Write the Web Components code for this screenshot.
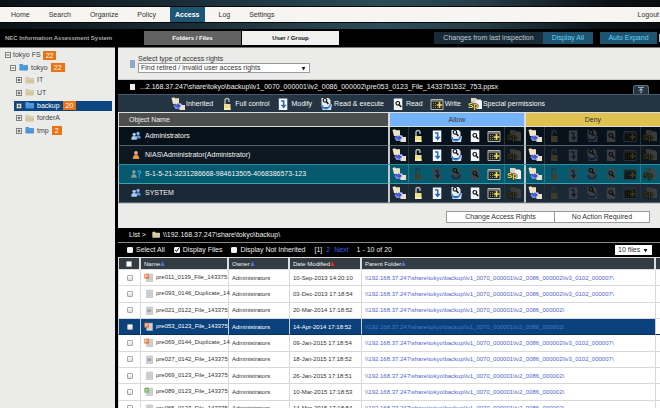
<!DOCTYPE html>
<html lang="en">
<head>
<meta charset="utf-8">
<title>NEC Information Assessment System</title>
<style>
html, body { margin: 0; height: 100%; }
body { font: 7px/8px "Liberation Sans", Arial, sans-serif; color: #333; background: #ecedeb; overflow: hidden; }
</style>
</head>
<body>
<app-shell>
  <top-nav slot="header"></top-nav>
  <sub-bar slot="header"></sub-bar>
  <folder-tree slot="side"></folder-tree>
  <filter-bar></filter-bar>
  <permission-panel></permission-panel>
  <file-list></file-list>
</app-shell>
<script>
const BASE = `*{box-sizing:border-box} button,select,input{font:inherit;color:inherit;margin:0;padding:0} button{border:0;background:none;cursor:pointer;white-space:nowrap} a{color:inherit;text-decoration:none}`;
function define(name, render) {
  customElements.define(name, class extends HTMLElement {
    connectedCallback() {
      if (this.shadowRoot) return;
      this.attachShadow({ mode: "open" }).innerHTML = `<style>${BASE}</style>` + render(this);
    }
  });
}

const folder = (a, b) => `<path d="M.5 2.2q0-1 1-1h3l1.200 1.300h5.300q1 0 1 1v5.500q0 1-1 1h-9.500q-1 0-1-1z" fill="${a}"/><path d="M.8 4.200h10.900" stroke="${b}" stroke-width=".8"/>`;
const people = c => `<circle cx="8.500" cy="3" r="2" fill="#7fb2ee"/><path d="M6 9V7q0-2 2.500-2T11.500 7v2z" fill="#5a90d6"/><circle cx="3.800" cy="4" r="2" fill="${c}"/><path d="M.5 10.500V8q0-2 3.200-2T7 8v2.500z" fill="${c}"/>`;
const doc = mark => `<path d="M3.500 1.500h8v10h-8z" fill="#d5d7d6" stroke="#a3a8a8" stroke-width=".7"/><path d="M5 4.500h5M5 6.500h5M5 8.500h5" stroke="#b0b4b5" stroke-width=".6"/>${mark}`;
const glass = (x, y) => `<g transform="translate(${x} ${y})" fill="none" stroke="#111"><circle cx="2.500" cy="2.300" r="1.800" stroke-width="1.200"/><path d="M3.900 3.700l2 2.300" stroke-width="1.500"/></g>`;
const ICONS = {
  inherited: [14, `<path d="M4 6h6l1 3-3 3H4.500L2.500 9z" fill="#8792e0"/><path d="M.5 1l2.500-.7 1 1h4V7h-6z" fill="#f1e4c4"/><path d="M8 7.500l2-.5.900.900H14V13H8.500z" fill="#eadfca"/><path d="M3 7.500q.5 2.500 3.500 2.500V12l3.700-3-3.700-3v2Q5 8 4.800 6.500z" fill="#3f58d6"/>`],
  full: [14, `<path d="M5 7V3.500q0-2 2-2t2 2V5" fill="none" stroke="#b9bbae" stroke-width="1.400"/><path d="M4 7h6.500v6H4z" fill="#eee08a"/><path d="M4 11h6.500v2H4z" fill="#f7efb0"/>`],
  modify: [14, `<path d="M2.800 1.500h8.500v11.500H2.800z" fill="#f4f8fc"/><path d="M5 4h2.700v5" fill="none" stroke="#2768b8" stroke-width="1.500"/><path d="M4.600 7.800h6L7.700 11.500z" fill="#2768b8"/>`],
  exec: [14, `<path d="M2.500 1h7l2 2v7h-9z" fill="#e9edf2"/>${glass(3.500, 1)}<path d="M3 8v3h6V9l4-2-1 6H3.500z" fill="#d8e7fb"/><path d="M3 8q.5 3.700 4 3.500 3.500 0 4-4" fill="none" stroke="#3b80d4" stroke-width="1.800"/>`],
  read: [14, `<path d="M2.800 1.500h8.500v11.500H2.800z" fill="#f3f5f6"/>${glass(4.300, 4)}`],
  write: [14, `<path d="M1 2.500h12v10H1z" fill="#242521" stroke="#c7cbc8" stroke-width=".9"/><path d="M1.500 4h11" stroke="#e4e4e0" stroke-width=".8"/><path d="M3 6.500h4M3 8.500h3M3 10.500h6" stroke="#85867a" stroke-width="1" stroke-dasharray="1 1"/><path d="M9.500 5v6M6.700 8h5.600" stroke="#f0dd56" stroke-width="1.700"/>`],
  special: [14, `<path d="M3 1h5l1 1.500v5H3z" fill="#ddd5bd"/><path d="M8 2.500h4.500L14 4v8H8z" fill="#f4f2eb"/><text x="0" y="11" font-family="Liberation Sans, Arial, sans-serif" font-weight="bold" font-size="8" fill="#f0df68" stroke="#2b2a12" stroke-width="1.200" paint-order="stroke">Sp</text>`],
  folder: [12, folder("#d3c7a2", "#e4dcc1")],
  blue: [12, folder("#4b93d7", "#74b2e8")],
  group: [12, people("#a9cdf5")],
  user: [12, `<circle cx="6" cy="3.500" r="2.200" fill="#f2b27a"/><path d="M2.300 10.700V9q.5-2.500 2.700-3.300h2Q9.200 6.500 9.700 9v1.700z" fill="#ef9548"/>`],
  unknown: [12, `<circle cx="3.500" cy="3.500" r="2" fill="#9ba5a8"/><path d="M.3 10.500V8.500q.7-2.500 3.200-2.500t3.200 2.500v2z" fill="#8c9699"/><path d="M8 4q.2-2 2-1.900 1.700.1 1.500 1.900Q11.200 5.500 9.800 6v2M9.800 9v1.700" stroke="#25b6e6" stroke-width="1.400" fill="none"/>`],
  ppt: [12, doc(`<path d="M.5 1h6v6.500h-6z" fill="#e8743a"/><path d="M2.200 6V2.500h1.500q1.200 0 1.200 1t-1.200 1H2.200" fill="none" stroke="#fff" stroke-width=".8"/>`)],
  plain: [12, doc("")],
  text: [12, doc(`<path d="M4.500 4.500h5v3.500h-5z" fill="#9fa5aa"/>`)],
  xls: [12, doc(`<path d="M.5 1h6v6.500h-6z" fill="#6cb355"/><path d="M2 2.500l3 3.500M5 2.500L2 6" stroke="#fff" stroke-width=".8"/>`)],
  minus: [8, `<path d="M.5.5h7v7h-7z" fill="#f6f6f4" stroke="#444" stroke-width="1"/><path d="M2 4h4" stroke="#222"/>`],
  plus: [8, `<path d="M.5.5h7v7h-7z" fill="#f6f6f4" stroke="#444" stroke-width="1"/><path d="M2 4h4M4 2v4" stroke="#222"/>`],
  arrow: [8, `<path d="M1 1.500h6L4 7z" fill="#111"/>`],
  sortblue: [8, `<path d="M.5 8h7L4 .5z" fill="#4a74e6"/>`],
  sortred: [8, `<path d="M.5 8h7L4 .5z" fill="#e02a2a"/>`],
  collapse: [12, `<path d="M1.500 2h9" stroke="#d5dde2" stroke-width="1.200"/><path d="M6 11V4M3 7l3-3 3 3" fill="none" stroke="#d5dde2" stroke-width="1.300"/>`]
};
define("ui-icon", el => {
  const [s, body] = ICONS[el.getAttribute("name")];
  return `<style>:host{display:inline-block;flex:none;width:var(--size,9px);height:var(--size,9px);vertical-align:middle} :host([dim]){filter:brightness(.28);opacity:.85} svg{display:block;width:100%;height:100%}</style><svg viewBox="0 0 ${s} ${s}" aria-hidden="true">${body}</svg>`;
});
const icon = (n, size = 9, extra = "") => `<ui-icon name="${n}" style="--size:${size}px" ${extra}></ui-icon>`;

define("app-shell", () => `<style>
:host{display:flex;flex-direction:column;height:100vh;overflow:hidden}
.body{flex:1;min-height:0;display:grid;grid-template-columns:115px minmax(0,1fr);column-gap:3px;background:#000}
aside,main{background:#ebecea;border-top:1px solid #777;overflow:hidden}
</style><header><slot name="header"></slot></header><div class="body"><aside><slot name="side"></slot></aside><main><slot></slot></main></div>`);

define("top-nav", () => `<style>
:host{display:block;padding:7px 0;background:linear-gradient(90deg,#0b1216,#182a34 25%,#2b4c59 58%,#263e49 72%,#0d1216 92%,#0b0e10)}
nav{display:flex;gap:9px;padding-left:6px;background:#f6f5f1;outline:1px solid #07090a;line-height:15px}
a{padding:0 5px} a.on{background:#1f5674;color:#fff;font-weight:bold} .out{margin-left:auto;padding:0 1px}
</style><nav>${["Home", "Search", "Organize", "Policy", "Access", "Log", "Settings"].map(t => `<a href="#"${t === "Access" ? ' class="on" aria-current="page"' : ""}>${t}</a>`).join("")}<a href="#" class="out">Logout</a></nav>`);

define("sub-bar", () => `<style>
:host{display:flex;align-items:center;height:18px;background:#000;overflow:hidden}
h1{margin:0;padding-left:5px;width:144px;flex:none;font-size:6px;font-weight:bold;color:#a8a8a8}
.tabs{display:flex;gap:1px;font-size:6px;font-weight:bold;line-height:14px} .tabs button{width:97px;background:#f0f1ef;color:#111} .tabs .on{background:#626262;color:#fff}
.acts{display:flex;margin-left:auto;line-height:12px} .acts button{background:#1f5470;color:#5fd3f5}
.acts span{width:109px;text-align:center;background:#182a35;color:#c3ced3} .all{width:50px} .acts .exp{width:57px;margin-left:7px} .edge{width:1px;margin:2px 0 2px 2px;background:#bbb}
</style><h1>NEC Information Assessment System</h1><div class="tabs"><button class="on">Folders / Files</button><button>User / Group</button></div><div class="acts"><span>Changes from last inspection</span><button class="all">Display All</button><button class="exp">Auto Expand</button><i class="edge"></i></div>`);

const TREE = [[0, "minus", "", "tokyo FS", 22], [1, "minus", "blue", "tokyo", 22], [2, "plus", "folder", "IT"], [2, "plus", "folder", "UT"], [2, "plus", "blue", "backup", 20, 1], [2, "plus", "folder", "forderA"], [2, "plus", "blue", "tmp", 2]];
define("tree-item", el => `<style>
:host{display:flex;align-items:center;gap:3px;height:10px;margin-right:3px;padding-left:2px;color:#444}
:host([level="0"]){margin-left:3px;gap:2px} :host([level="1"]){margin-left:8px} :host([level="2"]){margin-left:14px}
:host([selected]){background:#0d4580;color:#fff} button{line-height:0}
::slotted(b){background:#ea7414;color:#fff;font-weight:normal;padding:0 3px;line-height:9px}
</style><button aria-label="Toggle">${icon(el.getAttribute("toggle"), 6)}</button>${el.getAttribute("folder") ? icon(el.getAttribute("folder"), 9) : ""}<slot></slot>`);
define("folder-tree", () => `<style>:host{display:grid;grid-template-rows:repeat(7,1fr);align-items:center;height:88px;padding-top:1px}</style>` +
  TREE.map(([l, t, f, n, c, s]) => `<tree-item level="${l}" toggle="${t}" folder="${f}"${s ? " selected" : ""}><a href="#">${n}</a>${c ? `<b>${c}</b>` : ""}</tree-item>`).join(""));

const SELECT = `.sel{display:grid;align-items:center;background:#fff;border:1px solid #999;color:#333} .sel>*{grid-area:1/1} .sel select{appearance:none;border:0;background:none;width:100%;line-height:8px;padding-left:2px} .sel ui-icon{justify-self:end;margin-right:3px;pointer-events:none}`;
define("filter-bar", () => `<style>${SELECT}
:host{display:grid;grid-template-columns:5px 172px;column-gap:3px;align-items:center;padding:7px 12px 6px;border-bottom:1px solid #ccc}
i{width:5px;height:8px;background:#8faac9} label{line-height:8px;display:block}
</style><i></i><div><label for="t">Select type of access rights</label><div class="sel"><select id="t"><option>Find retired / invalid user access rights</option></select>${icon("arrow", 5)}</div></div>`);

const RIGHTS = ["inherited", "full", "modify", "exec", "read", "write", "special"];
const LABELS = ["Inherited", "Full control", "Modify", "Read &amp; execute", "Read", "Write", "Special permissions"];
const SUBJECTS = [["group", "Administrators", "1111110", "a"], ["user", "NIAS\\Administrator(Administrator)", "1111110", "b"], ["unknown", "S-1-5-21-3231286668-984613505-4068386573-123", "1000011", "hit"], ["group", "SYSTEM", "1111110", "d"]];
const cells = m => RIGHTS.map((r, i) => `<td class="r${i}">${icon(r, 14, m[i] === "1" ? "" : "dim")}</td>`).join("");
define("permission-panel", () => `<style>
:host{display:block}
.path{display:flex;align-items:center;height:14px;padding-left:12px;gap:5px;background:#000;color:#eee}
.path i{width:5px;height:6px;background:#eee} .path button{margin:0 11px 0 auto;align-self:flex-end;width:16px;height:9px;line-height:0;border:1px solid #617180;border-bottom:0;border-radius:3px 3px 0 0;background:#243443}
.legend{display:flex;align-items:center;height:18px;margin:0;padding:0 0 0 53px;gap:7px;background:#243443;color:#f4f4f4;list-style:none;border-top:1px solid #4b5a68}
.legend li{display:flex;align-items:center;gap:1px;white-space:nowrap}
table{width:100%;table-layout:fixed;border-collapse:separate;border-spacing:0;color:#f2f2f2}
.name{width:auto}.w0{width:21px}.w{width:19px}.w6{width:20px}
th{height:15px;padding:0;font-weight:normal;border:solid #dcdcd8;border-width:1px 0 1px 2px;text-align:center;color:#333}
thead th:first-child{text-align:left;padding-left:10px;background:#4c4d4d;color:#eee;border-left-width:1px}
.allow{background:#74b3fb}.deny{background:#e0c253}
tbody th{height:19px;text-align:left;padding-left:12px;color:#f2f2f2;border-width:0 0 1px 1px;border-color:#54616b #ccc}
td{height:19px;padding:0;text-align:center;line-height:0;border-bottom:1px solid #54616b}
.r0{border-left:2px solid #c4c8ca;border-right:1px solid #26323d}.r6{border-left:1px solid #26323d}
th ui-icon{margin-right:4px}
.a{background:#07111a}.b{background:#0d1823}.d{background:#1b2836}
.hit{background:#055a70}.hit th,.hit td{border-bottom-color:#3aa0b0;box-shadow:0 -1px #2e8d9e}
.hit .r0{border-right-color:#2b7888}.hit .r6{border-left-color:#2b7888}
.acts{display:flex;justify-content:flex-end;padding:7px 10px 5px;border-top:1px solid #ccc}
.acts button{height:12px;width:96px;background:#fff;border:1px solid #999;color:#333}.acts button:first-child{width:108px;border-right:0}
</style><div class="path"><i></i><span>...2.168.37.247\\share\\tokyo\\backup\\lv1_0070_000001\\lv2_0086_000002\\pre053_0123_File_1433751532_753.ppsx</span><button aria-label="Collapse">${icon("collapse", 8)}</button></div>
<ul class="legend">${RIGHTS.map((r, i) => `<li>${icon(r, 14)}<span>${LABELS[i]}</span></li>`).join("")}</ul>
<table><colgroup><col class="name">${`<col class="w0">${'<col class="w">'.repeat(5)}<col class="w6">`.repeat(2)}</colgroup>
<thead><tr><th>Object Name</th><th colspan="7" class="allow">Allow</th><th colspan="7" class="deny">Deny</th></tr></thead>
<tbody>${SUBJECTS.map(([k, n, m, c]) => `<tr class="${c}"><th scope="row">${icon(k, 10)}${n}</th>${cells(m)}${cells("1000000")}</tr>`).join("")}</tbody></table>
<div class="acts"><button>Change Access Rights</button><button>No Action Required</button></div>`);

const P2 = "\\\\192.168.37.247\\share\\tokyo\\backup\\lv1_0070_000001\\lv2_0086_000002\\", P3 = P2 + "lv3_0102_000007\\";
const FILES = [["ppt", "pre011_0139_File_143375", "10-Sep-2013 14:20:10", P3], ["plain", "pre093_0146_Duplicate_14", "03-Dec-2013 17:18:54", P3], ["text", "pre021_0122_File_143375", "20-Mar-2014 17:18:52", P2], ["ppt", "pre053_0123_File_143375", "14-Apr-2014 17:18:52", P2, 1], ["ppt", "pre069_0144_Duplicate_14", "09-Jan-2015 17:18:54", P3], ["text", "pre027_0142_File_143375", "18-Jan-2015 17:18:52", P3], ["plain", "pre069_0123_File_143375", "26-Jan-2015 17:18:51", P2], ["xls", "pre089_0123_File_143375", "10-Mar-2015 17:18:53", P2], ["plain", "pre065_0127_File_143375", "14-Mar-2015 17:18:54", P2]];
define("file-list", () => `<style>${SELECT}
:host{display:block;background:#fff}
.bar{display:flex;align-items:center;background:#000;color:#eee}
.where{height:14px;padding-left:11px}.where ui-icon{margin:0 3px 0 6px}
.tools{height:15px;padding:0 8px 0 9px;border-top:1px solid #888}
label{display:flex;align-items:center;gap:3px;margin-right:9px}
input{appearance:none;flex:none;width:6px;height:6px;background:#f4f4f4;border:1px solid #bbb;border-radius:1px}
.tools input{border-color:#eee}
.tick{display:grid}.tick>*{grid-area:1/1}.tick svg{width:6px;height:6px;pointer-events:none}
.pages{display:flex;gap:4px;margin-right:8px}.pages a{color:#3b5bea}
.sel{margin-left:auto;width:37px;height:10px;border-color:#fff}
table{width:100%;height:160px;table-layout:fixed;border-collapse:separate;border-spacing:0;font-size:6px}
th{height:13px;padding:0 3px;text-align:left;font-weight:normal;color:#f0f0f0;background:#343c43;border:solid #ddd;border-width:1px 2px 1px 0;white-space:nowrap}
td{height:16px;padding:0 3px;border:solid #d8dada;border-width:0 1px 1px 0;white-space:nowrap;color:#333}
th:first-child,td:first-child{text-align:center;border-left:1px solid #ddd}
td input,th input{display:block;margin:0 auto;border-color:#aaa;background:linear-gradient(#fff,#ddd)} th input{background:#fff}
td ui-icon{margin-right:3px} td:nth-child(2){padding-right:0} td:nth-child(5) a{color:#5564cf}
.on td{background:#0b417c;color:#fff;border-color:#06305f #c5cdd6}.on td:nth-child(5) a{color:#477ac5}
th:last-child,td:last-child{border-right:0;padding:0} .on td:last-child{background:#fff}
</style><div class="bar where"><span>List &gt;</span><span>${icon("folder", 8)}\\\\192.168.37.247\\share\\tokyo\\backup\\</span></div>
<div class="bar tools"><label><input type="checkbox">Select All</label><label><span class="tick"><input type="checkbox" checked><svg viewBox="0 0 6 6" aria-hidden="true"><path d="M1.300 3l1.200 1.500L4.800 1.200" fill="none" stroke="#111"/></svg></span>Display Files</label><label><input type="checkbox">Display Not Inherited</label><span class="pages"><span>[1]</span><a href="#">2</a><a href="#">Next</a></span><span>1 - 10 of 20</span><div class="sel"><select aria-label="Files per page"><option>10 files</option></select>${icon("arrow", 5)}</div></div>
<table><colgroup><col style="width:23px"><col style="width:88px"><col style="width:61px"><col style="width:72px"><col><col style="width:4px"></colgroup>
<thead><tr><th><input type="checkbox" aria-label="All"></th><th>Name${icon("sortblue", 5)}</th><th>Owner${icon("sortblue", 5)}</th><th>Date Modified${icon("sortred", 5)}</th><th>Parent Folder${icon("sortblue", 5)}</th><th></th></tr></thead>
<tbody>${FILES.map(([k, n, d, p, s]) => `<tr${s ? ' class="on"' : ""}><td><input type="checkbox" aria-label="${n}"></td><td>${icon(k, 9)}${n}</td><td>Administrators</td><td>${d}</td><td><a href="#">${p}</a></td><td></td></tr>`).join("")}</tbody></table>`);
</script>
</body>
</html>
